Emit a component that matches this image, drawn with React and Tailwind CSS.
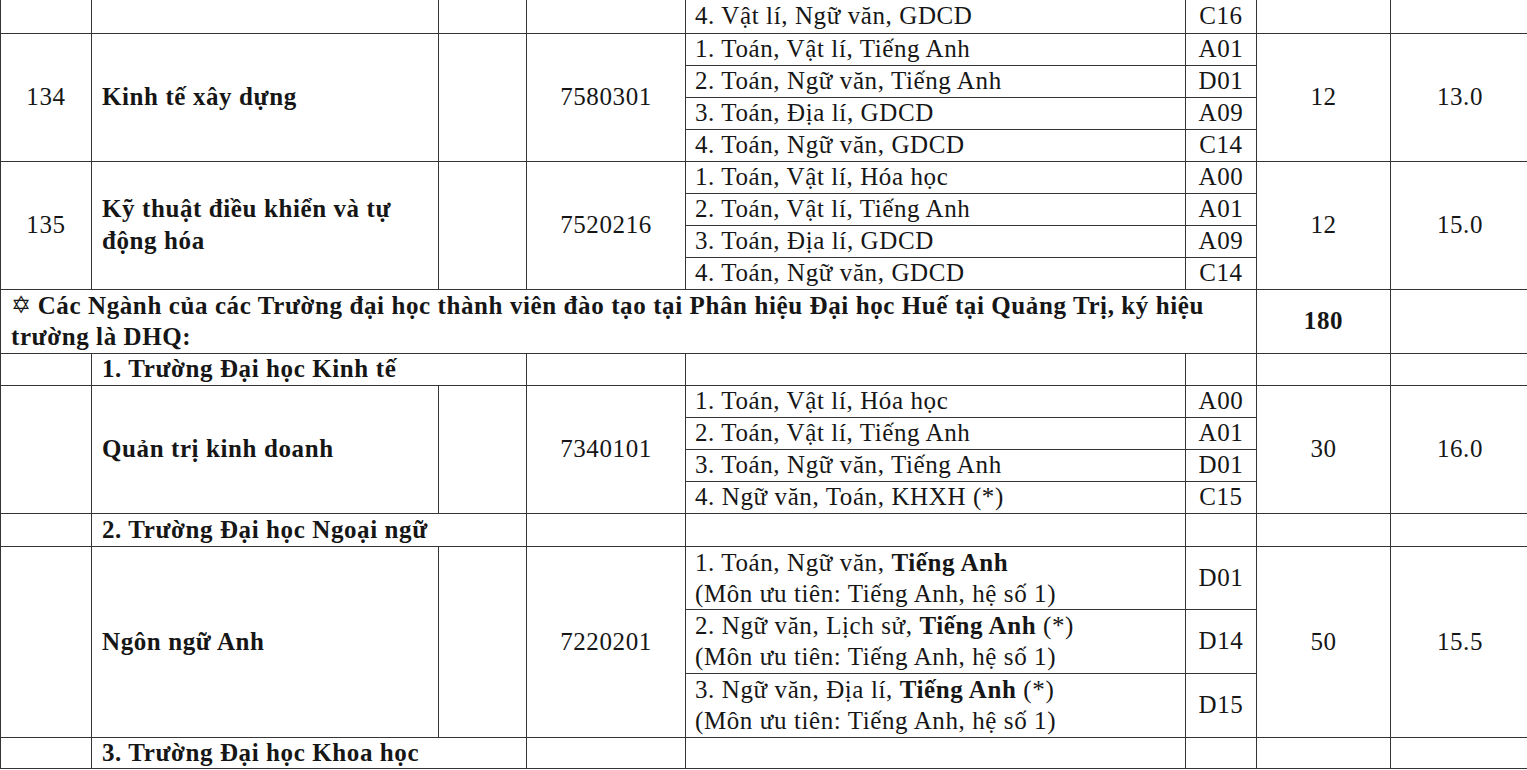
import React from "react";

const cell = "border border-[#353535] p-0 align-middle";
const center = cell + " text-center";
const subj = cell + " pl-[9px] whitespace-nowrap";

const majors = [
  {
    stt: "134",
    name: "Kinh tế xây dựng",
    code: "7580301",
    quota: "12",
    score: "13.0",
    options: [
      ["1. Toán, Vật lí, Tiếng Anh", "A01"],
      ["2. Toán, Ngữ văn, Tiếng Anh", "D01"],
      ["3. Toán, Địa lí, GDCD", "A09"],
      ["4. Toán, Ngữ văn, GDCD", "C14"],
    ],
  },
  {
    stt: "135",
    name: (
      <>
        Kỹ thuật điều khiển và tự
        <br />
        động hóa
      </>
    ),
    code: "7520216",
    quota: "12",
    score: "15.0",
    options: [
      ["1. Toán, Vật lí, Hóa học", "A00"],
      ["2. Toán, Vật lí, Tiếng Anh", "A01"],
      ["3. Toán, Địa lí, GDCD", "A09"],
      ["4. Toán, Ngữ văn, GDCD", "C14"],
    ],
  },
];

const qtkd = {
  stt: "",
  name: "Quản trị kinh doanh",
  code: "7340101",
  quota: "30",
  score: "16.0",
  options: [
    ["1. Toán, Vật lí, Hóa học", "A00"],
    ["2. Toán, Vật lí, Tiếng Anh", "A01"],
    ["3. Toán, Ngữ văn, Tiếng Anh", "D01"],
    ["4. Ngữ văn, Toán, KHXH (*)", "C15"],
  ],
};

const note = "(Môn ưu tiên: Tiếng Anh, hệ số 1)";

const nna = {
  stt: "",
  name: "Ngôn ngữ Anh",
  code: "7220201",
  quota: "50",
  score: "15.5",
  tall: true,
  options: [
    [
      <>
        1. Toán, Ngữ văn, <b>Tiếng Anh</b>
        <br />
        {note}
      </>,
      "D01",
    ],
    [
      <>
        2. Ngữ văn, Lịch sử, <b>Tiếng Anh</b> (*)
        <br />
        {note}
      </>,
      "D14",
    ],
    [
      <>
        3. Ngữ văn, Địa lí, <b>Tiếng Anh</b> (*)
        <br />
        {note}
      </>,
      "D15",
    ],
  ],
};

function Major({ m }) {
  const n = m.options.length;
  return (
    <>
      {m.options.map(([text, block], i) => (
        <tr key={i} className={m.tall ? (i === 0 ? "h-[62px]" : "h-[64px]") : "h-[32px]"}>
          {i === 0 && (
            <>
              <td rowSpan={n} className={center}>
                {m.stt}
              </td>
              <td rowSpan={n} className={cell + " pl-[10px] font-bold leading-[32px]"}>
                {m.name}
              </td>
              <td rowSpan={n} className={cell}></td>
              <td rowSpan={n} className={center}>
                {m.code}
              </td>
            </>
          )}
          <td className={subj + (m.tall ? " leading-[31px]" : "")}>{text}</td>
          <td className={center}>{block}</td>
          {i === 0 && (
            <>
              <td rowSpan={n} className={center}>
                {m.quota}
              </td>
              <td rowSpan={n} className={center}>
                {m.score}
              </td>
            </>
          )}
        </tr>
      ))}
    </>
  );
}

function SchoolRow({ title, h = "h-[32px]" }) {
  return (
    <tr className={h}>
      <td className={cell}></td>
      <td colSpan={2} className={cell + " pl-[10px] font-bold"}>
        {title}
      </td>
      <td className={cell}></td>
      <td className={cell}></td>
      <td className={cell}></td>
      <td className={cell}></td>
      <td className={cell}></td>
    </tr>
  );
}

export default function App() {
  return (
    <div className="w-full h-[770px] overflow-hidden bg-white [font-family:'Liberation_Serif','Times_New_Roman',serif]">
      <table className="table-fixed border-collapse w-[1529px] [font-family:'Liberation_Serif','Times_New_Roman',serif] text-[25px] tracking-[0.6px] leading-[30px] text-[#161616]">
        <colgroup>
          <col className="w-[91px]" />
          <col className="w-[347px]" />
          <col className="w-[88px]" />
          <col className="w-[159px]" />
          <col className="w-[500px]" />
          <col className="w-[71px]" />
          <col className="w-[134px]" />
          <col className="w-[139px]" />
        </colgroup>
        <tbody>
          <tr className="h-[33px]">
            <td className={cell + " border-t-0"}></td>
            <td className={cell + " border-t-0"}></td>
            <td className={cell + " border-t-0"}></td>
            <td className={cell + " border-t-0"}></td>
            <td className={subj + " border-t-0"}>4. Vật lí, Ngữ văn, GDCD</td>
            <td className={center + " border-t-0"}>C16</td>
            <td className={cell + " border-t-0"}></td>
            <td className={cell + " border-t-0"}></td>
          </tr>
          {majors.map((m) => (
            <Major key={m.code} m={m} />
          ))}
          <tr className="h-[64px]">
            <td colSpan={6} className={cell + " pl-[10px] font-bold leading-[31px]"}>
              <span className="[font-family:'DejaVu_Sans',sans-serif] font-normal text-[24px] leading-[20px] align-[1px] mr-[6px]">✡</span>
              Các Ngành của các Trường đại học thành viên đào tạo tại Phân hiệu Đại học Huế tại Quảng Trị, ký hiệu
              <br />
              trường là DHQ:
            </td>
            <td className={center + " font-bold"}>180</td>
            <td className={cell}></td>
          </tr>
          <SchoolRow title="1. Trường Đại học Kinh tế" />
          <Major m={qtkd} />
          <SchoolRow title="2. Trường Đại học Ngoại ngữ" h="h-[33px]" />
          <Major m={nna} />
          <SchoolRow title="3. Trường Đại học Khoa học" h="h-[31px]" />
        </tbody>
      </table>
    </div>
  );
}
